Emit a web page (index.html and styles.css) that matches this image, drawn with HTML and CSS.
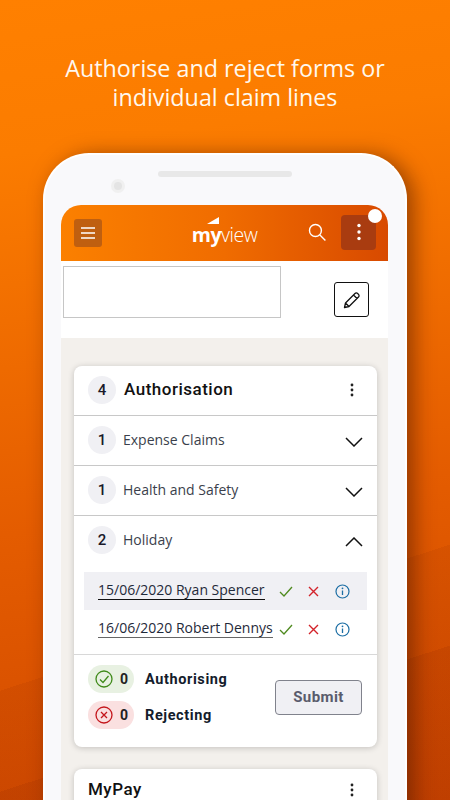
FILE: index.html
```html
<!DOCTYPE html>
<html lang="en">
<head>
	<meta charset="UTF-8" />
	<title>MyView</title>
	<link rel="stylesheet" href="styles.css">
</head>
<body>
	<div class="page">
		<h1 class="headline">Authorise and reject forms or<br>individual claim lines</h1>
		<div class="phone">
			<div class="phone-top">
				<span class="camera"></span>
				<span class="speaker"></span>
			</div>
			<div class="screen">
				<span class="dot"></span>
				<div class="appbar">
					<div class="menu-btn">
						<svg width="16" height="14" viewBox="0 0 16 14"><path d="M1 2h14M1 7h14M1 12h14" stroke="#fff" stroke-width="1.6" fill="none"/></svg>
					</div>
					<div class="logo">
						<svg class="logo-mark" width="12" height="7" viewBox="0 0 12 7"><path d="M0 7L12 0v7z" fill="#fff"/></svg>
						<span class="logo-my">my</span><span class="logo-view">view</span>
					</div>
					<svg class="search" width="20" height="20" viewBox="0 0 20 20"><circle cx="8.500" cy="8.500" r="6" stroke="#fff" stroke-width="1.400" fill="none"/><path d="M13 13l5.500 5.500" stroke="#fff" stroke-width="1.400" fill="none"/></svg>
					<div class="more-btn">
						<svg width="6" height="18" viewBox="0 0 6 18"><circle cx="3" cy="2.500" r="1.700" fill="#fff"/><circle cx="3" cy="9" r="1.700" fill="#fff"/><circle cx="3" cy="15.500" r="1.700" fill="#fff"/></svg>
					</div>
				</div>
				<div class="toolbar">
					<div class="blank-box"></div>
					<div class="edit-btn">
						<svg width="18" height="18" viewBox="0 0 18 18"><path d="M1.500 16.500l1-4.500L12 2.500a1.800 1.800 0 0 1 2.600 0l.9.900a1.800 1.800 0 0 1 0 2.600L6 15.500zM2.500 12L6 15.500M10.500 4l3.500 3.500" stroke="#111" stroke-width="1.300" fill="none" stroke-linejoin="round"/></svg>
					</div>
				</div>
				<div class="content">
					<div class="card">
						<div class="card-head">
							<span class="count">4</span>
							<span class="card-title">Authorisation</span>
							<svg class="kebab" width="4" height="14" viewBox="0 0 4 14"><circle cx="2" cy="2" r="1.400"/><circle cx="2" cy="7" r="1.400"/><circle cx="2" cy="12" r="1.400"/></svg>
						</div>
						<div class="group">
							<span class="count">1</span>
							<span class="group-name">Expense Claims</span>
							<svg class="chev" width="18" height="10" viewBox="0 0 18 10"><path d="M1 1l8 8 8-8" stroke="#111" stroke-width="1.500" fill="none"/></svg>
						</div>
						<div class="group">
							<span class="count">1</span>
							<span class="group-name">Health and Safety</span>
							<svg class="chev" width="18" height="10" viewBox="0 0 18 10"><path d="M1 1l8 8 8-8" stroke="#111" stroke-width="1.500" fill="none"/></svg>
						</div>
						<div class="group group-open">
							<span class="count">2</span>
							<span class="group-name">Holiday</span>
							<svg class="chev" width="18" height="10" viewBox="0 0 18 10"><path d="M1 9l8-8 8 8" stroke="#111" stroke-width="1.500" fill="none"/></svg>
						</div>
						<div class="lines">
							<div class="line line-on">
								<div class="line-text"><span>15/06/2020 Ryan Spencer</span></div>
								<svg class="act-tick" width="14" height="11" viewBox="0 0 14 11"><path d="M1 6l4 4 8-9" stroke="#4f8a1f" stroke-width="1.300" fill="none"/></svg>
								<svg class="act-cross" width="11" height="11" viewBox="0 0 11 11"><path d="M1 1l9 9M10 1l-9 9" stroke="#d3232a" stroke-width="1.400" fill="none"/></svg>
								<svg class="act-info" width="15" height="15" viewBox="0 0 15 15"><circle cx="7.500" cy="7.500" r="6.500" stroke="#1c6ea4" stroke-width="1.200" fill="none"/><path d="M7.500 6.500v4.500" stroke="#1c6ea4" stroke-width="1.300"/><circle cx="7.500" cy="4.300" r=".9" fill="#1c6ea4"/></svg>
							</div>
							<div class="line">
								<div class="line-text"><span class="line-soft">16/06/2020 Robert Dennys</span></div>
								<svg class="act-tick" width="14" height="11" viewBox="0 0 14 11"><path d="M1 6l4 4 8-9" stroke="#4f8a1f" stroke-width="1.300" fill="none"/></svg>
								<svg class="act-cross" width="11" height="11" viewBox="0 0 11 11"><path d="M1 1l9 9M10 1l-9 9" stroke="#d3232a" stroke-width="1.400" fill="none"/></svg>
								<svg class="act-info" width="15" height="15" viewBox="0 0 15 15"><circle cx="7.500" cy="7.500" r="6.500" stroke="#1c6ea4" stroke-width="1.200" fill="none"/><path d="M7.500 6.500v4.500" stroke="#1c6ea4" stroke-width="1.300"/><circle cx="7.500" cy="4.300" r=".9" fill="#1c6ea4"/></svg>
							</div>
						</div>
						<div class="card-foot">
							<div class="tallies">
								<div class="tally">
									<span class="pill pill-ok">
										<svg width="18" height="18" viewBox="0 0 18 18"><circle cx="9" cy="9" r="8" stroke="#3f8a1a" stroke-width="1.300" fill="none"/><path d="M5 9.500l3 3 5.500-6.500" stroke="#3f8a1a" stroke-width="1.300" fill="none"/></svg>
										<b>0</b>
									</span>
									<span class="tally-name">Authorising</span>
								</div>
								<div class="tally">
									<span class="pill pill-no">
										<svg width="18" height="18" viewBox="0 0 18 18"><circle cx="9" cy="9" r="8" stroke="#c4161c" stroke-width="1.300" fill="none"/><path d="M6 6l6 6M12 6l-6 6" stroke="#c4161c" stroke-width="1.300" fill="none"/></svg>
										<b>0</b>
									</span>
									<span class="tally-name">Rejecting</span>
								</div>
							</div>
							<div class="submit">Submit</div>
						</div>
					</div>
					<div class="card card-next">
						<div class="card-head card-head-plain">
							<span class="card-title">MyPay</span>
							<svg class="kebab" width="4" height="14" viewBox="0 0 4 14"><circle cx="2" cy="2" r="1.400"/><circle cx="2" cy="7" r="1.400"/><circle cx="2" cy="12" r="1.400"/></svg>
						</div>
					</div>
				</div>
			</div>
		</div>
	</div>
</body>
</html>
```

FILE: styles.css
```css
*{
	box-sizing:border-box;
}
html,body{
	margin:0;
	padding:0;
}
.page{
	width:450px;
	height:800px;
	overflow:hidden;
	padding-top:54px;
	background:
		linear-gradient(162deg,transparent 753px,rgba(110,20,0,.1) 753px),
		linear-gradient(162deg,transparent 657px,rgba(110,20,0,.08) 657px),
		linear-gradient(172deg,#ff8000 0%,#fb7c00 18%,#e45c00 62%,#d04800 100%);
	font-family:"Open Sans",sans-serif;
}
.headline{
	margin:0 0 41px;
	color:#fff8ee;
	font-size:23.3px;
	line-height:29px;
	font-weight:400;
	text-align:center;
}
.phone{
	width:364px;
	height:700px;
	margin-left:43px;
	padding:0 16px;
	background:#f9f9fb;
	border:2px solid #fff;
	border-bottom:0;
	border-radius:46px 46px 0 0;
	box-shadow:7px 2px 20px rgba(70,20,0,.5);
}
.phone-top{
	height:50px;
	position:relative;
}
.camera{
	position:absolute;
	left:50px;
	top:24px;
	width:14px;
	height:14px;
	border-radius:50%;
	background:#e4e4e4;
	border:3px solid #f0f0f0;
}
.speaker{
	position:absolute;
	left:97px;
	top:16px;
	width:134px;
	height:6px;
	border-radius:3px;
	background:#e8e8e8;
}
.screen{
	width:327px;
	position:relative;
	background:#fff;
	border-radius:20px 20px 0 0;
}
.dot{
	position:absolute;
	right:6px;
	top:4px;
	width:14px;
	height:14px;
	border-radius:50%;
	background:#fff;
}
.appbar{
	height:56px;
	display:flex;
	align-items:center;
	padding:0 12px 0 13px;
	background:linear-gradient(90deg,#fb8000 0%,#f06c00 50%,#d84a00 100%);
	border-radius:20px 20px 0 0;
}
.menu-btn{
	width:28px;
	height:28px;
	display:flex;
	align-items:center;
	justify-content:center;
	background:#bf5f10;
	border-radius:3px;
}
.logo{
	margin-left:90px;
	margin-top:3px;
	width:69px;
	position:relative;
	color:#fff;
	font-size:19.500px;
	line-height:24px;
	letter-spacing:-.5px;
}
.logo-mark{
	position:absolute;
	left:15px;
	top:-6px;
}
.logo-my{
	font-weight:700;
}
.logo-view{
	font-weight:300;
}
.search{
	margin-left:47px;
	margin-top:-3px;
}
.more-btn{
	width:35px;
	height:35px;
	margin-left:14px;
	margin-top:-2px;
	display:flex;
	align-items:center;
	justify-content:center;
	background:#a93c10;
	border-radius:4px;
}
.toolbar{
	height:77px;
	display:flex;
	align-items:flex-start;
	padding:5px 19px 0 2px;
	justify-content:space-between;
	background:#fff;
}
.blank-box{
	width:218px;
	height:52px;
	border:1px solid #c6c6c6;
}
.edit-btn{
	width:35px;
	height:35px;
	margin-top:16px;
	display:flex;
	align-items:center;
	justify-content:center;
	border:1px solid #111;
	border-radius:3px;
}
.content{
	background:#f3f0ec;
	padding:28px 11px 0 13px;
	height:470px;
}
.card{
	width:303px;
	background:#fff;
	border-radius:8px;
	box-shadow:0 1px 6px rgba(0,0,0,.2);
}
.card-next{
	margin-top:22px;
	height:80px;
}
.card-head{
	height:50px;
	display:flex;
	align-items:center;
	padding:0 23px 2px 14px;
	border-bottom:1px solid #c8c8c8;
}
.card-head-plain{
	border-bottom:0;
	height:44px;
}
.count{
	width:28px;
	height:28px;
	display:flex;
	align-items:center;
	justify-content:center;
	border-radius:50%;
	background:#f0f0f4;
	color:#1a1a2a;
	font-family:Roboto,sans-serif;
	font-size:15px;
	font-weight:500;
}
.card-title{
	flex:1;
	margin-bottom:2px;
	color:#111;
	font-family:Roboto,sans-serif;
	font-size:17px;
	font-weight:500;
	letter-spacing:.5px;
}
.count + .card-title{
	margin-left:8px;
}
.kebab{
	fill:#222;
}
.group{
	height:50px;
	display:flex;
	align-items:center;
	padding:0 14px 2px 14px;
	border-bottom:1px solid #c8c8c8;
}
.group-open{
	border-bottom:0;
	padding-bottom:3px;
}
.group-name{
	flex:1;
	margin-left:7px;
	color:#3b3f4c;
	font-size:14px;
}
.chev{
	margin-top:5px;
}
.lines{
	padding:6px 10px 6px 10px;
	border-bottom:1px solid #d8d8d8;
}
.line{
	height:38px;
	display:flex;
	align-items:center;
	padding:0 17px 0 14px;
	color:#1f2a3a;
	font-size:14px;
}
.line-on{
	background:#f0f0f4;
}
.line-text{
	width:181px;
	margin-top:-2px;
	white-space:nowrap;
}
.line-text span{
	display:inline-block;
	border-bottom:1px solid #111;
	line-height:19px;
}
.line-text .line-soft{
	border-bottom-color:#666;
}
.act-tick{
	margin-left:0;
}
.act-cross{
	margin-left:15px;
}
.act-info{
	margin-left:16px;
}
.card-foot{
	height:92px;
	display:flex;
	align-items:center;
	justify-content:space-between;
	padding:0 15px 8px 14px;
}
.tallies{
	display:flex;
	flex-direction:column;
	gap:8px;
}
.tally{
	display:flex;
	align-items:center;
}
.pill{
	width:46px;
	height:28px;
	display:flex;
	align-items:center;
	gap:7px;
	padding-left:7px;
	border-radius:14px;
	font-family:Roboto,sans-serif;
	font-size:14px;
	color:#222;
}
.pill-ok{
	background:#e8f1e2;
}
.pill-no{
	background:#fae0e0;
}
.tally-name{
	margin-left:11px;
	color:#141c2c;
	font-family:Roboto,sans-serif;
	font-size:14.500px;
	font-weight:700;
	letter-spacing:.6px;
}
.submit{
	width:87px;
	height:35px;
	display:flex;
	align-items:center;
	justify-content:center;
	background:#f0f0f4;
	border:1px solid #80828c;
	border-radius:4px;
	color:#5a5c6c;
	font-family:Roboto,sans-serif;
	font-size:15px;
	font-weight:700;
	letter-spacing:.4px;
}
```
